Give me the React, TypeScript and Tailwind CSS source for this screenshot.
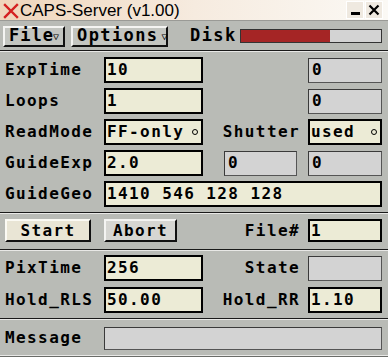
import React from "react"

const mono = "font-['DejaVu_Sans_Mono',monospace] font-bold text-[16px] tracking-[1.4px] text-black"

const Entry = ({ value, w, circle }: { value: string; w: string; circle?: boolean }) => (
  <div
    className={`${w} h-[26px] bg-[#ecebd6] border-2 border-black flex items-center pl-[1px] pr-[3px] ${mono} leading-none`}
  >
    <span className="flex-1 whitespace-nowrap">{value}</span>
    {circle && <span className="w-[6px] h-[6px] rounded-full border border-black" />}
  </div>
)

const ReadOnly = ({ value, w, h = "h-[25px]" }: { value?: string; w: string; h?: string }) => (
  <div
    className={`${w} ${h} bg-[#d3d3d3] border border-t-[#3a3a3a] border-l-[#3a3a3a] border-b-[#555] border-r-[#555] flex items-center pl-[3px] ${mono} leading-none`}
  >
    {value}
  </div>
)

const Label = ({ text }: { text: string }) => (
  <div className={`w-[99px] ${mono} whitespace-nowrap`}>{text}</div>
)

const Separator = () => (
  <div className="w-full">
    <div className="h-px bg-[#1a1a1a]" />
    <div className="h-px bg-[#e8e8e6]" />
  </div>
)

const RightLabel = ({ text }: { text: string }) => (
  <div className={`w-[105px] flex justify-end pr-[8px] ${mono} whitespace-nowrap`}>{text}</div>
)

const App = () => {
  return (
    <div className="w-[388px] h-[357px] bg-[#b9bbb6] overflow-hidden flex flex-col">
      {/* title bar */}
      <div className="h-[21px] flex items-center bg-gradient-to-r from-[#efd5bb] via-[#f6ebdf] to-[#fbf9f5] border-b border-[#9a9a96]">
        <svg width="16" height="16" viewBox="0 0 16 16" className="ml-[3px] mt-[2px]">
          <path d="M2 2 L14 14 M14 2 L2 14" stroke="#d42020" strokeWidth="2.4" strokeLinecap="square" />
        </svg>
        <span className="ml-[1px] font-['Liberation_Sans',sans-serif] text-[17px] leading-none text-black">
          CAPS-Server (v1.00)
        </span>
        <div className="ml-auto mr-[5px] flex gap-[1px]">
          <div className="w-[18px] h-[18px] border border-white bg-[#efe9e0] flex items-end justify-center pb-[3px]">
            <div className="w-[9px] h-[3px] bg-black" />
          </div>
          <div className="w-[18px] h-[18px] border border-white bg-[#efe9e0] flex items-center justify-center">
            <svg width="12" height="12" viewBox="0 0 12 12">
              <path d="M1.5 1.5 L10.5 10.5 M10.5 1.5 L1.5 10.5" stroke="black" strokeWidth="2.2" />
            </svg>
          </div>
        </div>
      </div>

      {/* menu row */}
      <div className="h-[29px] flex items-center pl-[3px] pr-[6px] pt-[1px]">
        <div className={`h-[21px] w-[62px] flex items-center pl-[4px] bg-[#c3c5c0] border-2 border-t-[#f4f4f2] border-l-[#f4f4f2] border-b-[#111] border-r-[#111] ${mono} text-[17px] tracking-[1px]`}>
          File<span className="text-[10px] font-normal tracking-normal ml-[-1px]">▽</span>
        </div>
        <div className={`ml-[6px] h-[21px] w-[97px] flex items-center pl-[4px] bg-[#c3c5c0] border-2 border-t-[#f4f4f2] border-l-[#f4f4f2] border-b-[#111] border-r-[#111] ${mono} text-[17px] tracking-[0.5px]`}>
          Options<span className="text-[10px] font-normal tracking-normal ml-[3px]">▽</span>
        </div>
        <span className={`ml-[22px] ${mono} text-[17px] tracking-[0.8px]`}>Disk</span>
        <div className="ml-[3px] flex-1 h-[14px] bg-[#d3d3d3] border border-[#333] flex">
          <div className="w-[89px] h-full bg-[#a52525]" />
        </div>
      </div>

      <Separator />

      {/* parameter rows */}
      <div className="pl-[5px] pt-[5px] flex flex-col gap-[5px]">
        <div className="flex items-center">
          <Label text="ExpTime" />
          <Entry value="10" w="w-[99px]" />
          <div className="w-[105px]" />
          <ReadOnly value="0" w="w-[74px]" />
        </div>
        <div className="flex items-center">
          <Label text="Loops" />
          <Entry value="1" w="w-[99px]" />
          <div className="w-[105px]" />
          <ReadOnly value="0" w="w-[74px]" />
        </div>
        <div className="flex items-center">
          <Label text="ReadMode" />
          <Entry value="FF-only" w="w-[99px]" circle />
          <RightLabel text="Shutter" />
          <Entry value="used" w="w-[74px]" circle />
        </div>
        <div className="flex items-center">
          <Label text="GuideExp" />
          <Entry value="2.0" w="w-[99px]" />
          <div className="w-[21px]" />
          <ReadOnly value="0" w="w-[73px]" />
          <div className="w-[11px]" />
          <ReadOnly value="0" w="w-[74px]" />
        </div>
        <div className="flex items-center">
          <Label text="GuideGeo" />
          <Entry value="1410 546 128 128" w="w-[278px]" />
        </div>
      </div>

      <div className="mt-[5px]">
        <Separator />
      </div>

      {/* buttons row */}
      <div className="pl-[5px] pt-[5px] flex items-center h-[28px]">
        <div className={`w-[86px] h-[23px] bg-[#e9e5d5] border-2 border-t-[#fbfaf4] border-l-[#fbfaf4] border-b-[#111] border-r-[#111] flex items-center justify-center ${mono}`}>
          Start
        </div>
        <div className="w-[13px]" />
        <div className={`w-[73px] h-[23px] bg-[#d6d6d2] border-2 border-t-[#f4f4f2] border-l-[#f4f4f2] border-b-[#111] border-r-[#111] flex items-center justify-center ${mono}`}>
          Abort
        </div>
        <div className={`w-[131px] flex justify-end pr-[8px] ${mono}`}>File#</div>
        <div className="w-[74px] h-[23px] bg-[#ecebd6] border-2 border-black flex items-center pl-[1px]">
          <span className={`${mono} leading-none`}>1</span>
        </div>
      </div>

      <div className="mt-[7px]">
        <Separator />
      </div>

      <div className="pl-[5px] pt-[4px] flex flex-col gap-[6px]">
        <div className="flex items-center">
          <Label text="PixTime" />
          <Entry value="256" w="w-[99px]" />
          <RightLabel text="State" />
          <ReadOnly w="w-[74px]" />
        </div>
        <div className="flex items-center">
          <Label text="Hold_RLS" />
          <Entry value="50.00" w="w-[99px]" />
          <RightLabel text="Hold_RR" />
          <Entry value="1.10" w="w-[74px]" />
        </div>
      </div>

      <div className="mt-[5px]">
        <Separator />
      </div>

      <div className="pl-[5px] pt-[6px] flex items-center">
        <Label text="Message" />
        <ReadOnly w="w-[278px]" h="h-[23px]" />
      </div>

      <div className="mt-[5px] h-px bg-[#e8e8e6]" />
      <div className="flex-1 bg-[#b9bbb6] border-t border-[#6a6c68]" />
    </div>
  )
}

export default App
